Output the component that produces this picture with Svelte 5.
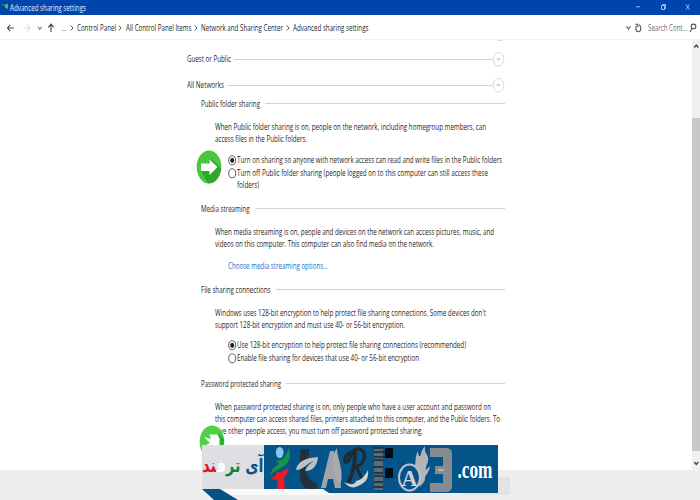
<script>
  const crumbs = [
    ['Control Panel', 39],
    ['All Control Panel Items', 65.5],
    ['Network and Sharing Center', 82],
    ['Advanced sharing settings', 75.5],
  ];
  const groups = [
    { name: 'Guest or Public', w: 44, open: false },
    { name: 'All Networks', w: 37, open: true },
  ];
  const sections = [
    {
      name: 'Public folder sharing', w: 59, height: 105, gap: 9,
      text: [
        ['When Public folder sharing is on, people on the network, including homegroup members, can', 271],
        ['access files in the Public folders.', 92],
      ],
      options: [
        { on: true, lines: [['Turn on sharing so anyone with network access can read and write files in the Public folders', 265]] },
        { on: false, lines: [['Turn off Public folder sharing (people logged on to this computer can still access these', 251], ['folders)', 22]] },
      ],
    },
    {
      name: 'Media streaming', w: 48.5, height: 81, gap: 10,
      text: [
        ['When media streaming is on, people and devices on the network can access pictures, music, and', 279],
        ['videos on this computer. This computer can also find media on the network.', 219],
      ],
      link: ['Choose media streaming options...', 100],
    },
    {
      name: 'File sharing connections', w: 69.5, height: 94, gap: 8,
      text: [
        ["Windows uses 128-bit encryption to help protect file sharing connections. Some devices don't", 271],
        ['support 128-bit encryption and must use 40- or 56-bit encryption.', 190],
      ],
      options: [
        { on: true, lines: [['Use 128-bit encryption to help protect file sharing connections (recommended)', 229]] },
        { on: false, lines: [['Enable file sharing for devices that use 40- or 56-bit encryption', 182]] },
      ],
    },
    {
      name: 'Password protected sharing', w: 80, height: 92, gap: 8,
      text: [
        ['When password protected sharing is on, only people who have a user account and password on', 276],
        ['this computer can access shared files, printers attached to this computer, and the Public folders. To', 285],
        ['give other people access, you must turn off password protected sharing.', 208],
      ],
    },
  ];
</script>

{#snippet line(text, w)}
  <svg class="line" width={w} height="12"><text x="0" y="9.3" transform="scale(.7 1)" textLength={w / 0.7} lengthAdjust="spacingAndGlyphs">{text}</text></svg>
{/snippet}

{#snippet chevron()}
  <svg class="chev" width="4" height="8" viewBox="0 0 4 8"><path d="M.8 1.5 3 4 .8 6.5" /></svg>
{/snippet}

{#snippet arrowBadge()}
  <svg width="26" height="34" viewBox="0 0 26 34">
    <ellipse cx="13" cy="17" rx="12.3" ry="16.5" fill="#4cc63e" />
    <path d="M15.5 9 25 18.5C24.5 27 19 33 12 33.5L5 21z" fill="#2fa82b" />
    <path d="M5 13.5h8.5V9.5l8 7.5-8 8v-4H5z" fill="#fff" />
  </svg>
{/snippet}

<div class="window">
  <header class="title">
    <svg width="10" height="15" viewBox="0 0 10 15"><path d="M4 5 7.8 3.5 8 9 5.5 8z" fill="#39d34a" /><path d="M2 3.5 3.5 6" stroke="#1a86bc" /></svg>
    {@render line('Advanced sharing settings', 76)}
    <svg class="controls" width="64" height="15" viewBox="0 0 64 15">
      <path d="M0 6.8h4M25.5 5.5h3v4h-3zM26.5 5.5v-1h3v4h-1M50 4.5l3.5 5M53.5 4.5l-3.5 5" />
    </svg>
  </header>

  <nav>
    <svg class="arrows" width="55" height="14" viewBox="0 0 55 14">
      <path d="M7.5 7H14M10.2 3.8 7.5 7l2.7 3.2" stroke="#444" />
      <path d="M23.5 7H30M27.3 3.8 30 7l-2.7 3.2" stroke="#ddd" />
      <path d="M38 5.8l1.8 2.6 1.8-2.6" stroke="#777" />
      <path d="M51 11V3.2M48.3 6.3 51 3.2l2.7 3.1" stroke="#444" />
    </svg>
    <span class="dots">{@render line('...', 4)}</span>
    {#each crumbs as [name, w]}
      {@render chevron()}{@render line(name, w)}
    {/each}
    <div class="search">
      <svg width="17" height="14" viewBox="0 0 17 14">
        <path d="M1.5 5.2 3.5 8l2-2.8M10.3 3.2h2.5v2.8M11.6 4.8c-1.5 2-.9 5.9 1.7 5.9 2.9 0 3.5-5 .9-6.9" />
      </svg>
      {@render line('Search Cont...', 39.5)}
      <svg width="8" height="14" viewBox="0 0 8 14"><circle cx="4.5" cy="5.4" r="2.3" /><path d="M3 7.5.8 11" /></svg>
    </div>
  </nav>

  <main>
    <div class="content">
      <div class="previous"></div>
      {#each groups as g}
        <div class="group">
          {@render line(g.name, g.w)}
          <hr />
          <svg width="13" height="16" viewBox="0 0 13 16">
            <ellipse cx="6.5" cy="8.3" rx="5.3" ry="6.8" />
            <path class="mark" d={g.open ? 'M5 9l1.5-2L8 9' : 'M5 7.2l1.5 2 1.5-2'} />
          </svg>
        </div>
      {/each}
      {#each sections as s}
        <section style:height="{s.height}px">
          <div class="head">{@render line(s.name, s.w)}<hr /></div>
          <div class="text">
            {#each s.text as [t, w]}{@render line(t, w)}{/each}
          </div>
          <div class="choices" style:padding-top="{s.gap}px">
            {#each s.options ?? [] as o}
              <div class="option">
                <svg width="9" height="12" viewBox="0 0 9 12">
                  <ellipse cx="4.2" cy="6.3" rx="3.5" ry="4.5" />
                  {#if o.on}<ellipse class="dot" cx="4.2" cy="6.3" rx="2" ry="2.6" />{/if}
                </svg>
                <div class="label">
                  {#each o.lines as [t, w]}{@render line(t, w)}{/each}
                </div>
              </div>
            {/each}
            {#if s.link}<span class="link">{@render line(s.link[0], s.link[1])}</span>{/if}
          </div>
        </section>
      {/each}
    </div>
    <div class="scroll">
      <svg width="8" height="14" viewBox="0 0 8 14"><path d="M2.3 7.5 4.3 5l2 2.5" /></svg>
      <div class="thumb"></div>
      <svg width="8" height="14" viewBox="0 0 8 14"><path d="M2.3 6 4.3 8.5l2-2.5" /></svg>
    </div>
  </main>
  <footer><div class="button"></div></footer>

  <div class="badge one">{@render arrowBadge()}</div>
  <div class="badge two">
    <svg width="26" height="34" viewBox="0 0 26 34">
      <ellipse cx="13" cy="17" rx="12.3" ry="16.5" fill="#52d044" />
      <path d="M20 8 25 14 24 24 20 28z" fill="#2fae28" />
      <path d="M5 12 12 14 10.5 9.5H18l2.5 4V24H5v-3l6-3z" fill="#fff" />
    </svg>
  </div>

  <svg class="banner" width="300" height="55" viewBox="0 0 300 55">
    <path d="M14 44H122l6 5v1H25z" fill="#f8f8f8" />
    <path d="M0 44H18L36 55H12z" fill="#045184" />
    <path d="M0 0H62V44H0z" fill="#dedfe2" />
    <path d="M62 0H296V48H127l-6-4H62z" fill="#045489" />
    <text class="persian" transform="translate(61.5 27) scale(.76 1)" direction="rtl"><tspan fill="#075289">آی</tspan> <tspan fill="#14803a">تر</tspan><tspan fill="#fff">ف</tspan><tspan fill="#d9141d">ند</tspan></text>

    <ellipse cx="77.7" cy="7.5" rx="3.8" ry="5.5" fill="#83c9ea" />
    <path d="M68 31c1-6 4-9 9-12l-3-4c5 1 8-1 10-5l3-7c2 8 1 14-5 18-5 4-9 4-14 10z" fill="#149447" />
    <path d="M74 27c5 1 8-1 13-5-1 7-4 8-5 12l1 10h-7l-1-9-6-1c3-3 6-4 5-7z" fill="#ed1c24" />
    <path d="M99 4h8v7c-3 3-3 5-3 9 0 10 3 16 11 18v6h-8c-8-1-9-9-9-19V8z" fill="#22303b" />
    <path d="M94 25c2-10 11-12 22-13-1 10-6 14-13 14 2-5 5-8 9-10-6 1-10 9-18 9z" fill="#bdc1c4" />
    <path d="M119 43 128 6h4l7 37h-6l-2-9h-5l-2 9z" fill="#a0a4a7" />
    <path d="M133 28c-5-9-3-18 2-25 0 11 8 22 3 39z" fill="#a7abae" />
    <g fill="none" stroke="#202a32" stroke-linecap="round">
      <path d="M151 7c-4-1-9 5-8 10 6 1 5-12 12-13 11-1 9 16-1 18 3 4 5 10 7 15" stroke-width="3.3" />
      <path d="M153 8c0 12-2 20-6 28" stroke-width="4" />
    </g>
    <path d="M142 37c4 5 9 7 14 4 8-3 11-8 10-16-3 6-7 10-12 11-1 4-6 4-12 1z" fill="#ced1d4" />
    <path d="M172 3h9v42h-9z" fill="#526d7b" />
    <path d="M172 3h9M172 7h15M172 12h12M172 15h9M172 22h9M172 28h9M172 31h9M172 37h9M172 42h9" stroke="#172630" stroke-width="1.5" />
    <path d="M183 3h8v10h-8zM183 23h8v10h-8z" fill="#020c14" />
    <path d="M213 20c1-5 0-8 3-14 0 5 2 7 3 3 1-5 3-6 4-8-1 8 3 8 3 12 1 5-3 8-2 12l4-4c-1 8-6 9-5 14-2 4-4 5-6 7 2-10 1-15-6-19z" fill="#b2b6ba" />
    <ellipse cx="207.5" cy="32.5" rx="10.5" ry="13" fill="#045489" stroke="#c1c3c6" stroke-width="2" />
    <text class="anarchy" x="199.5" y="41" textLength="16" lengthAdjust="spacingAndGlyphs">A</text>
    <path d="M228 3h15c5 0 7 2 7 6v32c0 4-2 6-7 6h-15v-9h13V29h-8v-8h8v-9h-13z" fill="#858b91" />
    <path d="M236 24h6v2h-6z" fill="#aab7c2" />
    <text class="com" x="255.5" y="32.5" textLength="35" lengthAdjust="spacingAndGlyphs">.com</text>
  </svg>
</div>

<style>
  :global(body) { overflow: hidden; }
  .window { position: relative; width: 700px; height: 500px; display: flex; flex-direction: column; background: #fff; overflow: hidden; font-family: "Open Sans", "Noto Sans", sans-serif; font-size: 9px; }
  svg { display: block; flex: none; overflow: visible; }
  .line { fill: #1f1f1f; }
  .title { height: 15px; display: flex; background: #0045ae; }
  .title .line { fill: #e4eefc; margin-top: 1.5px; }
  .controls { margin-left: auto; }
  .controls path { fill: none; stroke: #c4d5f2; stroke-width: .8; }
  nav { display: flex; align-items: center; border-bottom: 1px solid #f3f3f3; box-sizing: border-box; padding-top: 2px; height: 25px; }
  .arrows path, .search path, .search circle { fill: none; stroke-width: 1.1; }
  .dots { margin: 0 3.5px 0 7px; }
  .chev { margin: 0 3.3px 0 2.7px; }
  .dots + .chev { margin-left: 0; }
  .chev path { fill: none; stroke: #555; }
  .search { margin-left: auto; display: flex; align-items: center; gap: 6px; padding-right: 3px; }
  .search .line { fill: #6b6b6b; }
  .search .line + svg { margin-left: -4px; }
  .search path, .search circle { stroke: #555; }
  main { height: 430px; display: flex; justify-content: space-between; }
  .content { width: 318px; margin-left: 187px; }
  .previous { height: 6px; width: 5px; margin-left: 310px; box-sizing: border-box; background: linear-gradient(#dedede, #dedede) 0 0 / 5px 1px no-repeat; }
  .group { height: 26px; display: flex; align-items: center; gap: 3px; }
  .group hr, .head hr { flex: 1; height: 1px; margin: 0; border: 0; background: #d2d2d2; }
  .group svg:last-child { margin-left: -3px; }
  .group ellipse { fill: none; stroke: #cfcfcf; stroke-width: .8; }
  .mark { fill: none; stroke: #a5a5a5; }
  section { box-sizing: border-box; padding-left: 14px; }
  .head { display: flex; height: 12px; gap: 5px; }
  .head hr { margin-top: 5px; }
  .text { display: flex; flex-direction: column; padding: 11px 0 0 14px; }
  .choices { padding-left: 26.5px; }
  .option { display: flex; align-items: flex-start; }
  .label { display: flex; flex-direction: column; padding-bottom: 1px; }
  .label .line + .line { margin-top: -.5px; }
  .option ellipse { fill: #fff; stroke: #333; stroke-width: .8; }
  .option .dot { fill: #222; stroke: none; }
  .link .line { fill: #1c70c4; margin-left: .5px; }
  .scroll { width: 8px; display: flex; flex-direction: column; background: #f0f0f0; }
  .scroll path { fill: none; stroke: #444; stroke-width: 1.4; }
  .thumb { margin-top: 64px; height: 333px; background: #c8c8c8; }
  .scroll svg:last-child { margin-top: 5px; }
  footer { height: 30px; background: #eee; display: flex; }
  .button { width: 48px; height: 18px; margin: 7px 0 0 462px; background: #e3e3e3; }
  .badge { position: absolute; }
  .one { left: 196px; top: 150px; }
  .two { left: 199px; top: 425px; }
  .banner { position: absolute; left: 202px; top: 445px; }
  .persian { font: bold 19px "DejaVu Sans", sans-serif; }
  .anarchy { font: bold 23px "Liberation Serif", serif; fill: #d2d5d8; }
  .com { font: bold 26px "Liberation Serif", serif; fill: #fff; }
</style>
